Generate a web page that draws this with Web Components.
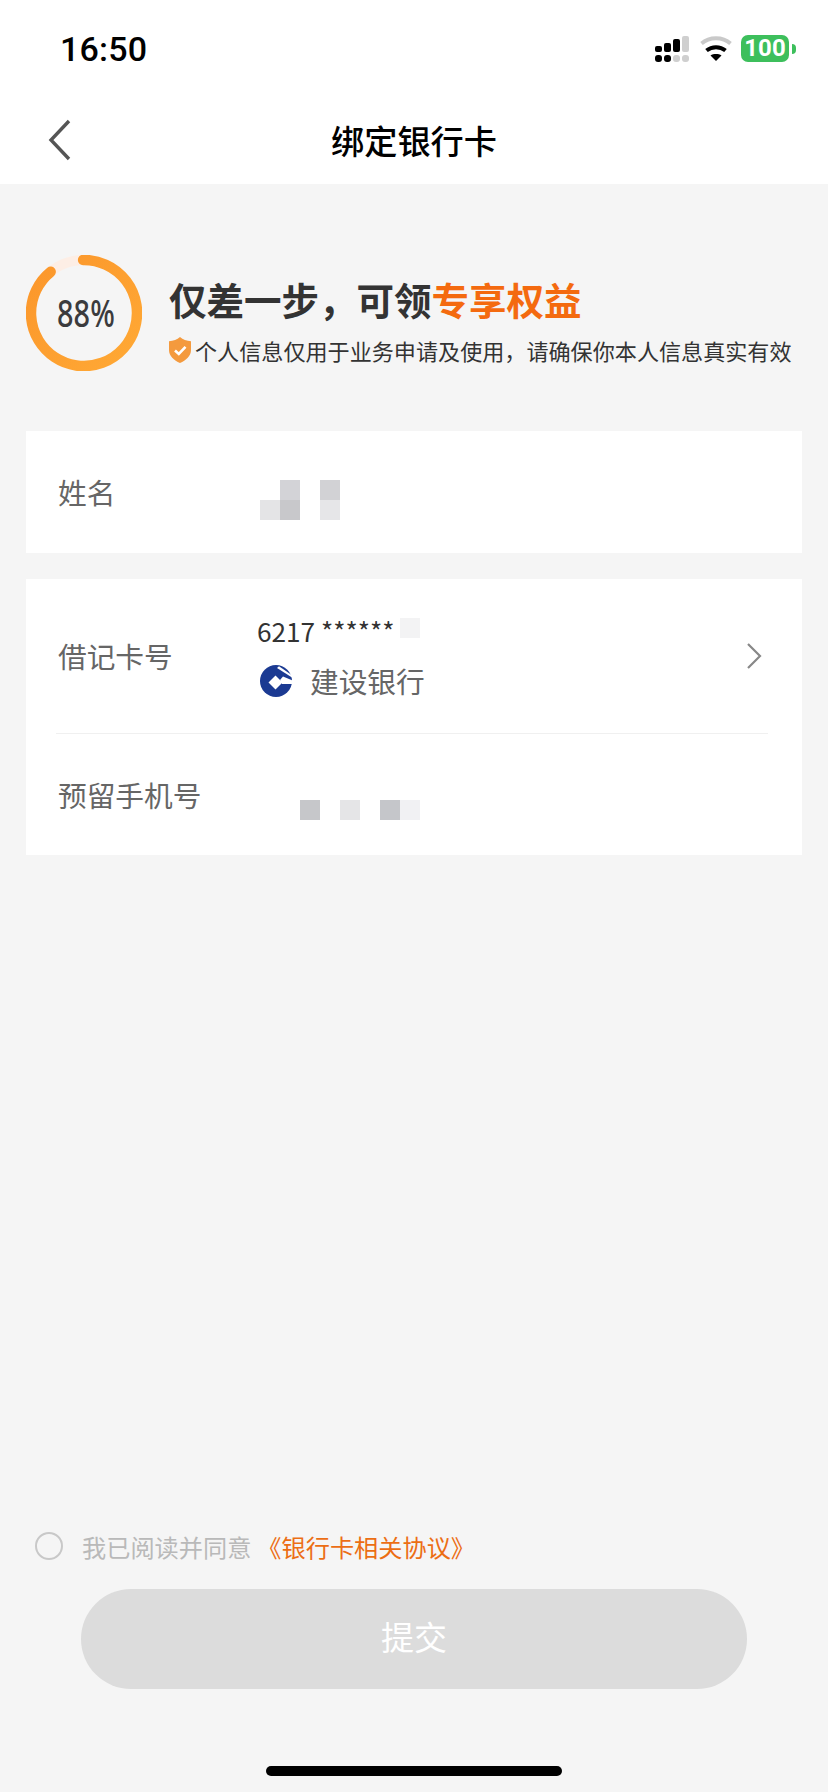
<!DOCTYPE html>
<html lang="zh-CN">
<head>
<meta charset="utf-8">
<title>绑定银行卡</title>
<style>
  html, body { margin: 0; padding: 0; background: #f5f5f5; }
  body { font-family: "Noto Sans CJK SC", "Noto Sans", sans-serif; }
</style>
</head>
<body>
<bind-card-page>
  <status-bar slot="top" time="16:50" battery="100"></status-bar>
  <nav-bar slot="top">绑定银行卡</nav-bar>
  <progress-head percent="88">
    <span slot="title">仅差一步，可领<em style="font-style:normal;color:#f46a0f">专享权益</em></span>
    个人信息仅用于业务申请及使用，请确保你本人信息真实有效
  </progress-head>
  <form-card style="margin-top:60px">
    <form-row label="姓名" height="122">
      <mosaic-mask style="margin-top:16px" cells="260,0,#fff;280,0,#d3d3d7;300,0,#fff;320,0,#d2d2d5;260,1,#e4e4e6;280,1,#c8c8cb;300,1,#fff;320,1,#e6e6e8"></mosaic-mask>
    </form-row>
  </form-card>
  <form-card style="margin-top:26px">
    <form-row label="借记卡号" height="154" arrow divider>
      <card-number number="6217 ******" bank="建设银行"></card-number>
    </form-row>
    <form-row label="预留手机号" height="121">
      <mosaic-mask style="margin:30px 0 0 43px" cells="300,0,#c6c7ca;320,0,#fff;340,0,#e5e5e7;360,0,#fff;380,0,#c5c6ca;400,0,#f1f1f3"></mosaic-mask>
    </form-row>
  </form-card>
  <agree-bar slot="bottom">《银行卡相关协议》</agree-bar>
  <submit-button slot="bottom">提交</submit-button>
  <home-bar slot="bottom"></home-bar>
</bind-card-page>

<script>
class BindCardPage extends HTMLElement {
  constructor() {
    super();
    this.attachShadow({ mode: "open" });
    this.shadowRoot.innerHTML = `
      <style>
        :host { display: flex; flex-direction: column; width: 828px; height: 1792px; background: #f5f5f5; overflow: hidden; }
        .main { flex: 1; padding: 0 26px; }
        .bottom { display: flex; flex-direction: column; }
      </style>
      <slot name="top"></slot>
      <div class="main"><slot></slot></div>
      <div class="bottom"><slot name="bottom"></slot></div>
    `;
  }
}

class StatusBar extends HTMLElement {
  constructor() {
    super();
    this.attachShadow({ mode: "open" });
  }
  connectedCallback() {
    this.shadowRoot.innerHTML = `
      <style>
        :host { display: flex; justify-content: space-between; height: 96px; background: #fff; box-sizing: border-box; padding: 31px 32px 0 60px; }
        .time { font: 500 34px/36px Roboto, "Liberation Sans", sans-serif; color: #000; letter-spacing: .2px; }
        .icons { display: flex; align-items: flex-start; padding-top: 5px; }
        .signal { width: 34px; height: 27px; }
        .wifi { width: 32px; height: 25px; margin-left: 11px; }
        .battery { display: flex; align-items: center; margin: -1px 0 0 9px; }
        .cell { width: 48px; height: 27px; border-radius: 7px; background: #3dbf5c; color: #fff; text-align: center; font: 700 24px/27px Roboto, "Liberation Sans", sans-serif; }
        .tip { width: 4px; height: 10px; margin-left: 3px; background: #3dbf5c; border-radius: 0 4px 4px 0; }
      </style>
      <div class="time">${this.getAttribute("time")}</div>
      <div class="icons">
        <svg class="signal" viewBox="0 0 34 27">
          <g fill="#000">
            <rect x="0" y="10" width="7" height="6" rx="2"/><rect x="9" y="7" width="7" height="9" rx="2"/><rect x="18" y="3" width="7" height="13" rx="2"/>
            <rect x="0" y="19" width="7" height="7" rx="3"/><rect x="9" y="19" width="7" height="7" rx="3"/>
          </g>
          <g fill="#cfcfcf">
            <rect x="27" y="0" width="7" height="16" rx="2"/>
            <rect x="18" y="19" width="7" height="7" rx="3"/><rect x="27" y="19" width="7" height="7" rx="3"/>
          </g>
        </svg>
        <svg class="wifi" viewBox="0 0 32 25" fill="none">
          <path d="M1.5 7.5C9.5 .6 22.5 .6 30.5 7.5" stroke="#c9c9c9" stroke-width="4"/>
          <path d="M6.5 14.5C12 10 20 10 25.5 14.5" stroke="#000" stroke-width="4"/>
          <path d="M10.5 19.5C13.5 17.6 18.500 17.6 21.500 19.500L16 25Z" fill="#000"/>
        </svg>
        <div class="battery"><div class="cell">${this.getAttribute("battery")}</div><div class="tip"></div></div>
      </div>
    `;
  }
}

class NavBar extends HTMLElement {
  constructor() {
    super();
    this.attachShadow({ mode: "open" });
    this.shadowRoot.innerHTML = `
      <style>
        :host { display: flex; align-items: center; justify-content: center; position: relative; height: 88px; background: #fff; }
        svg { position: absolute; left: 48px; top: 23px; width: 24px; height: 42px; }
        .title { font-size: 33.200px; font-weight: 500; color: #000; line-height: 44px; margin-top: -1px; }
      </style>
      <svg viewBox="0 0 24 42" fill="none"><path d="M21 2L3 21L21 40" stroke="#555" stroke-width="3.400"/></svg>
      <div class="title"><slot></slot></div>
    `;
  }
}

class ProgressHead extends HTMLElement {
  constructor() {
    super();
    this.attachShadow({ mode: "open" });
  }
  connectedCallback() {
    const pct = this.getAttribute("percent");
    // the arc starts just left of twelve o'clock and runs clockwise, leaving a 40deg pale gap
    const r = 53, c = 58;
    const pt = deg => {
      const a = (deg - 90) * Math.PI / 180;
      return `${(c + r * Math.cos(a)).toFixed(2)} ${(c + r * Math.sin(a)).toFixed(2)}`;
    };
    this.shadowRoot.innerHTML = `
      <style>
        :host { display: flex; padding-top: 71px; }
        .ring { display: grid; place-items: center; width: 116px; height: 116px; flex: none; }
        .ring > * { grid-area: 1 / 1; }
        .pct { font: 500 38px/1 "Noto Sans", sans-serif; color: #3b3b3d; transform: scaleX(.76); margin: -3px 0 0 3px; }
        .copy { margin-left: 27px; padding-top: 21px; }
        .title { font-size: 37.500px; font-weight: 700; line-height: 46px; color: #333; white-space: nowrap; }
        .sub { display: flex; align-items: center; margin-top: 13px; font-size: 22.100px; line-height: 30px; color: #333; white-space: nowrap; }
        .sub svg { width: 22px; height: 26px; margin-right: 4px; flex: none; }
      </style>
      <div class="ring">
        <svg width="116" height="116" viewBox="0 0 116 116" fill="none">
          <defs><linearGradient id="g" x1="0" y1="0" x2="1" y2="1"><stop offset="0" stop-color="#fb962b"/><stop offset="1" stop-color="#ffa935"/></linearGradient></defs>
          <circle cx="${c}" cy="${c}" r="${r}" stroke="#fdeee5" stroke-width="10"/>
          <path d="M${pt(-1)} A${r} ${r} 0 1 1 ${pt(-39)}" stroke="url(#g)" stroke-width="10.500" stroke-linecap="round"/>
        </svg>
        <div class="pct">${pct}%</div>
      </div>
      <div class="copy">
        <div class="title"><slot name="title"></slot></div>
        <div class="sub">
          <svg viewBox="0 0 22 26">
            <path d="M11 0C14 2.500 17.500 3.800 22 4.200V13C22 19 17 23.500 11 26C5 23.500 0 19 0 13V4.200C4.500 3.800 8 2.500 11 0Z" fill="#f49a3e"/>
            <path d="M6 13.500L9.800 17L16.500 9.800" fill="none" stroke="#fff" stroke-width="2.600"/>
          </svg>
          <span><slot></slot></span>
        </div>
      </div>
    `;
  }
}

class FormCard extends HTMLElement {
  constructor() {
    super();
    this.attachShadow({ mode: "open" });
    this.shadowRoot.innerHTML = `
      <style>:host { display: block; background: #fff; }</style>
      <slot></slot>
    `;
  }
}

class FormRow extends HTMLElement {
  constructor() {
    super();
    this.attachShadow({ mode: "open" });
  }
  connectedCallback() {
    const arrow = this.hasAttribute("arrow")
      ? `<svg class="arrow" viewBox="0 0 16 28" fill="none"><path d="M2 2L14 14L2 26" stroke="#888" stroke-width="2.200"/></svg>`
      : "";
    const line = this.hasAttribute("divider") ? `<div class="line"></div>` : "";
    this.shadowRoot.innerHTML = `
      <style>
        :host { display: block; position: relative; }
        .row { display: flex; align-items: center; box-sizing: border-box; height: ${this.getAttribute("height")}px; padding: 0 40px 0 32px; }
        .label { width: 199px; flex: none; font-size: 28.700px; line-height: 40px; color: #666; white-space: nowrap; }
        .value { flex: 1; display: flex; align-items: center; }
        .arrow { width: 16px; height: 28px; flex: none; }
        .line { height: 1px; margin: 0 34px 0 30px; background: #f0f0f0; }
      </style>
      <div class="row">
        <div class="label">${this.getAttribute("label")}</div>
        <div class="value"><slot></slot></div>
        ${arrow}
      </div>
      ${line}
    `;
  }
}

// privacy mosaic: 20px squares in two rows, cells given as "x,row,colour"
class MosaicMask extends HTMLElement {
  constructor() {
    super();
    this.attachShadow({ mode: "open" });
  }
  connectedCallback() {
    const cells = this.getAttribute("cells").split(";").map(s => s.split(","));
    const minX = Math.min(...cells.map(c => Number(c[0])));
    const html = cells.map(c =>
      `<i style="grid-column:${(Number(c[0]) - minX) / 20 + 1};grid-row:${Number(c[1]) + 1};background:${c[2]}"></i>`
    ).join("");
    this.shadowRoot.innerHTML = `
      <style>
        :host { display: grid; grid-auto-columns: 20px; grid-auto-rows: 20px; margin-left: 3px; }
        i { display: block; }
      </style>
      ${html}
    `;
  }
}

class CardNumber extends HTMLElement {
  constructor() {
    super();
    this.attachShadow({ mode: "open" });
  }
  connectedCallback() {
    this.shadowRoot.innerHTML = `
      <style>
        :host { display: block; margin-top: -1px; }
        .num { display: flex; align-items: center; height: 40px; font-size: 26.200px; color: #333; white-space: pre; }
        .num i { display: block; width: 20px; height: 20px; margin: -6px 0 0 6px; background: #f3f3f4; }
        .bank { display: flex; align-items: center; height: 40px; margin-top: 10px; font-size: 28.700px; color: #666; }
        svg { width: 32px; height: 32px; margin: 0 18px 0 3px; flex: none; }
      </style>
      <div class="num"><span>${this.getAttribute("number")}</span><i></i></div>
      <div class="bank">
        <svg viewBox="0 0 32 32">
          <circle cx="16" cy="16" r="16" fill="#1b3a92"/>
          <path d="M15.500 10.500L22.500 17.500L15.500 24.500L8.500 17.500Z" fill="#fff"/>
          <path d="M20 15L23 11.500L32.500 15.500V19H22Z" fill="#fff"/>
          <path d="M17 3L19 1.200L32.500 10.500V12.800Z" fill="#fff"/>
        </svg>
        <span>${this.getAttribute("bank")}</span>
      </div>
    `;
  }
}

class AgreeBar extends HTMLElement {
  constructor() {
    super();
    this.attachShadow({ mode: "open" });
    this.shadowRoot.innerHTML = `
      <style>
        :host { display: flex; align-items: center; height: 32px; padding-left: 35px; font-size: 24.200px; color: #b9b9b9; white-space: nowrap; }
        .radio { box-sizing: border-box; width: 28px; height: 28px; border: 2px solid #c8c8c8; border-radius: 50%; margin-right: 19px; }
        .link { color: #ec6e14; margin-left: 6px; }
      </style>
      <div class="radio"></div>
      <span>我已阅读并同意</span>
      <span class="link"><slot></slot></span>
    `;
  }
}

class SubmitButton extends HTMLElement {
  constructor() {
    super();
    this.attachShadow({ mode: "open" });
    this.shadowRoot.innerHTML = `
      <style>
        :host { display: flex; align-items: center; justify-content: center; box-sizing: border-box; width: 666px; height: 100px; margin: 27px 0 0 81px; padding-bottom: 6px; border-radius: 50px; background: #dcdcdc; color: #fff; font-size: 33px; }
      </style>
      <slot></slot>
    `;
  }
}

class HomeBar extends HTMLElement {
  constructor() {
    super();
    this.attachShadow({ mode: "open" });
    this.shadowRoot.innerHTML = `
      <style>
        :host { display: block; width: 296px; height: 10px; margin: 77px 0 16px 266px; border-radius: 5px; background: #000; }
      </style>
    `;
  }
}

customElements.define("bind-card-page", BindCardPage);
customElements.define("status-bar", StatusBar);
customElements.define("nav-bar", NavBar);
customElements.define("progress-head", ProgressHead);
customElements.define("form-card", FormCard);
customElements.define("form-row", FormRow);
customElements.define("mosaic-mask", MosaicMask);
customElements.define("card-number", CardNumber);
customElements.define("agree-bar", AgreeBar);
customElements.define("submit-button", SubmitButton);
customElements.define("home-bar", HomeBar);
</script>
</body>
</html>
